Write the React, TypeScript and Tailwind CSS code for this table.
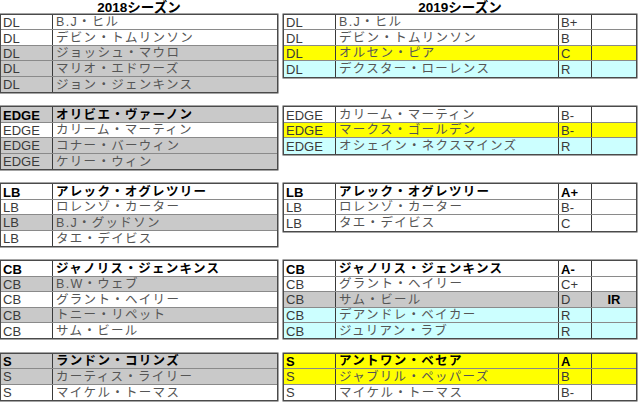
import React from "react";

type Fill = "w" | "g" | "y" | "c";
type Row = { pos: string; name: string; fill: Fill; bold?: boolean; grade?: string; note?: string };

const fillCls: Record<Fill, string> = {
  w: "bg-white",
  g: "bg-[#c9c9c9]",
  y: "bg-[#ffff00]",
  c: "bg-[#ccffff]",
};

const left: Row[][] = [
  [
    { pos: "DL", name: "B.J・ヒル", fill: "w" },
    { pos: "DL", name: "デビン・トムリンソン", fill: "w" },
    { pos: "DL", name: "ジョッシュ・マウロ", fill: "g" },
    { pos: "DL", name: "マリオ・エドワーズ", fill: "g" },
    { pos: "DL", name: "ジョン・ジェンキンス", fill: "g" },
  ],
  [
    { pos: "EDGE", name: "オリビエ・ヴァーノン", fill: "g", bold: true },
    { pos: "EDGE", name: "カリーム・マーティン", fill: "w" },
    { pos: "EDGE", name: "コナー・バーウィン", fill: "g" },
    { pos: "EDGE", name: "ケリー・ウィン", fill: "g" },
  ],
  [
    { pos: "LB", name: "アレック・オグレツリー", fill: "w", bold: true },
    { pos: "LB", name: "ロレンゾ・カーター", fill: "w" },
    { pos: "LB", name: "B.J・グッドソン", fill: "g" },
    { pos: "LB", name: "タエ・デイビス", fill: "w" },
  ],
  [
    { pos: "CB", name: "ジャノリス・ジェンキンス", fill: "w", bold: true },
    { pos: "CB", name: "B.W・ウェブ", fill: "g" },
    { pos: "CB", name: "グラント・ヘイリー", fill: "w" },
    { pos: "CB", name: "トニー・リペット", fill: "g" },
    { pos: "CB", name: "サム・ビール", fill: "w" },
  ],
  [
    { pos: "S", name: "ランドン・コリンズ", fill: "g", bold: true },
    { pos: "S", name: "カーティス・ライリー", fill: "g" },
    { pos: "S", name: "マイケル・トーマス", fill: "w" },
  ],
];

const right: Row[][] = [
  [
    { pos: "DL", name: "B.J・ヒル", fill: "w", grade: "B+" },
    { pos: "DL", name: "デビン・トムリンソン", fill: "w", grade: "B" },
    { pos: "DL", name: "オルセン・ピア", fill: "y", grade: "C" },
    { pos: "DL", name: "デクスター・ローレンス", fill: "c", grade: "R" },
  ],
  [
    { pos: "EDGE", name: "カリーム・マーティン", fill: "w", grade: "B-" },
    { pos: "EDGE", name: "マークス・ゴールデン", fill: "y", grade: "B-" },
    { pos: "EDGE", name: "オシェイン・ネクスマインズ", fill: "c", grade: "R" },
  ],
  [
    { pos: "LB", name: "アレック・オグレツリー", fill: "w", bold: true, grade: "A+" },
    { pos: "LB", name: "ロレンゾ・カーター", fill: "w", grade: "B-" },
    { pos: "LB", name: "タエ・デイビス", fill: "w", grade: "C" },
  ],
  [
    { pos: "CB", name: "ジャノリス・ジェンキンス", fill: "w", bold: true, grade: "A-" },
    { pos: "CB", name: "グラント・ヘイリー", fill: "w", grade: "C+" },
    { pos: "CB", name: "サム・ビール", fill: "g", grade: "D", note: "IR" },
    { pos: "CB", name: "デアンドレ・ベイカー", fill: "c", grade: "R" },
    { pos: "CB", name: "ジュリアン・ラブ", fill: "c", grade: "R" },
  ],
  [
    { pos: "S", name: "アントワン・ベセア", fill: "y", bold: true, grade: "A" },
    { pos: "S", name: "ジャブリル・ペッパーズ", fill: "y", grade: "B" },
    { pos: "S", name: "マイケル・トーマス", fill: "w", grade: "B-" },
  ],
];

// rows reserved for each block (table rows + one blank row after it)
const slots = [6, 5, 5, 6, 3];

function Table({ rows, wide }: { rows: Row[]; wide?: boolean }) {
  return (
    <div className="shadow-[0_0_0_1.5px_#4a4a4a]">
      {rows.map((r, i) => (
        <div
          key={i}
          className={`flex h-[15.4px] box-border ${i < rows.length - 1 ? "border-b border-[#8a8a8a]" : ""} ${fillCls[r.fill]}`}
        >
          <div className={`w-[51px] shrink-0 pl-[2px] pt-[1px] flex items-center text-[13px] ${r.bold ? "font-bold text-black" : "text-[#3a3a3a]"}`}>
            {r.pos}
          </div>
          <div
            className={`flex-1 border-l border-[#3a3a3a] pl-[3px] pt-[1px] flex items-center text-[12.5px] tracking-[1.3px] whitespace-nowrap ${r.bold ? "font-bold text-black" : "text-[#555]"}`}
          >
            {r.name}
          </div>
          {wide && (
            <>
              <div className={`w-[33px] shrink-0 border-l border-[#3a3a3a] pl-[2px] pt-[1px] flex items-center text-[13px] ${r.bold ? "font-bold text-black" : "text-[#3a3a3a]"}`}>
                {r.grade}
              </div>
              <div className="w-[45px] shrink-0 border-l border-[#3a3a3a] pt-[1px] flex items-center justify-center font-bold text-black text-[13px]">
                {r.note}
              </div>
            </>
          )}
        </div>
      ))}
    </div>
  );
}

function Column({ title, blocks, wide, width }: { title: string; blocks: Row[][]; wide?: boolean; width: string }) {
  return (
    <div className={`${width} shrink-0 flex flex-col`}>
      <div className="h-[15px] flex items-end justify-center pb-[1px] font-bold text-[13.5px] text-black">{title}</div>
      {blocks.map((b, i) => (
        <div key={i} className="flex flex-col" style={{ height: `${slots[i] * 15.4}px` }}>
          <Table rows={b} wide={wide} />
        </div>
      ))}
    </div>
  );
}

export default function App() {
  return (
    <div
      className="w-[640px] h-[408px] bg-white overflow-hidden flex gap-[7px] pl-[1px] text-[12px] leading-none"
      style={{ fontFamily: "'Liberation Sans', 'Noto Sans CJK JP', sans-serif" }}
    >
      <Column title="2018シーズン" blocks={left} width="w-[276px]" />
      <Column title="2019シーズン" blocks={right} wide width="w-[352px]" />
    </div>
  );
}
